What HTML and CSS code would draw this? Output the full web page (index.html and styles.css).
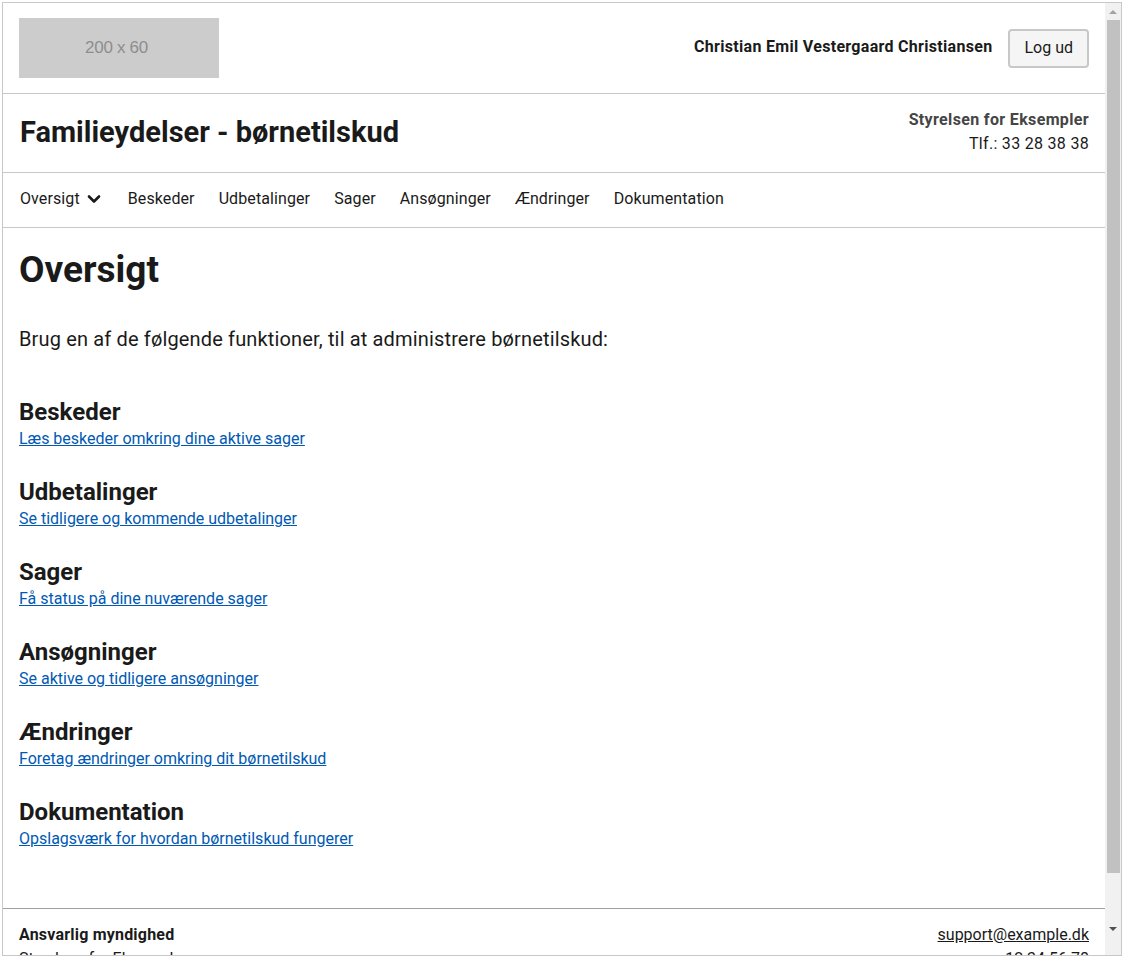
FILE: index.html
```html
<!DOCTYPE html>
<html lang="da">
<head>
<meta charset="utf-8">
<title>Familieydelser - børnetilskud</title>
<link rel="stylesheet" href="styles.css">
</head>
<body>
<div class="frame">
  <div class="viewport">
    <header class="site-header">
      <div class="logo">200 x 60</div>
      <div class="user">
        <span class="user-name">Christian Emil Vestergaard Christiansen</span>
        <button class="btn" type="button">Log ud</button>
      </div>
    </header>
    <div class="title-row">
      <div class="title">Familieydelser - børnetilskud</div>
      <div class="authority">
        <div class="authority-name">Styrelsen for Eksempler</div>
        <div class="authority-phone">Tlf.: 33 28 38 38</div>
      </div>
    </div>
    <nav class="nav">
      <a class="nav-item nav-current" href="#">Oversigt
        <svg class="chevron" width="14" height="10" viewBox="0 0 14 10" aria-hidden="true"><path d="M2 2.5 L7 7.5 L12 2.5" fill="none" stroke="#1a1a1a" stroke-width="2.6" stroke-linecap="round" stroke-linejoin="round"/></svg>
      </a>
      <a class="nav-item" href="#">Beskeder</a>
      <a class="nav-item" href="#">Udbetalinger</a>
      <a class="nav-item" href="#">Sager</a>
      <a class="nav-item" href="#">Ansøgninger</a>
      <a class="nav-item" href="#">Ændringer</a>
      <a class="nav-item" href="#">Dokumentation</a>
    </nav>
    <main class="main">
      <h1 class="page-title">Oversigt</h1>
      <p class="lead">Brug en af de følgende funktioner, til at administrere børnetilskud:</p>
      <section class="section">
        <h2 class="section-title">Beskeder</h2>
        <a class="link" href="#">Læs beskeder omkring dine aktive sager</a>
      </section>
      <section class="section">
        <h2 class="section-title">Udbetalinger</h2>
        <a class="link" href="#">Se tidligere og kommende udbetalinger</a>
      </section>
      <section class="section">
        <h2 class="section-title">Sager</h2>
        <a class="link" href="#">Få status på dine nuværende sager</a>
      </section>
      <section class="section">
        <h2 class="section-title">Ansøgninger</h2>
        <a class="link" href="#">Se aktive og tidligere ansøgninger</a>
      </section>
      <section class="section">
        <h2 class="section-title">Ændringer</h2>
        <a class="link" href="#">Foretag ændringer omkring dit børnetilskud</a>
      </section>
      <section class="section">
        <h2 class="section-title">Dokumentation</h2>
        <a class="link" href="#">Opslagsværk for hvordan børnetilskud fungerer</a>
      </section>
    </main>
    <footer class="footer">
      <div class="footer-col">
        <div class="footer-heading">Ansvarlig myndighed</div>
        <div>Styrelsen for Eksempler</div>
      </div>
      <div class="footer-col footer-right">
        <a class="footer-link" href="#">support@example.dk</a>
        <div>12 34 56 78</div>
      </div>
    </footer>
  </div>
  <div class="scrollbar">
    <div class="sb-button"><span class="arrow-up"></span></div>
    <div class="sb-thumb"></div>
    <div class="sb-track"></div>
    <div class="sb-button"><span class="arrow-down"></span></div>
    <div class="sb-rest"></div>
  </div>
</div>
</body>
</html>
```

FILE: styles.css
```css
* { box-sizing: border-box; }

html, body {
  margin: 0;
  padding: 0;
  background: #fff;
}

body {
  font-family: Roboto, "Noto Sans", sans-serif;
  font-size: 16px;
  line-height: 24px;
  color: #1a1a1a;
}

.frame {
  margin: 2px 0 0 2px;
  width: 1120px;
  height: 954px;
  border: 1px solid #c8c8c8;
  display: flex;
  overflow: hidden;
}

.viewport {
  flex: 1;
  overflow: hidden;
  display: flex;
  flex-direction: column;
}

/* header */
.site-header {
  display: flex;
  align-items: center;
  justify-content: space-between;
  padding: 15px 16px;
  border-bottom: 1px solid #c8c8c8;
  flex-shrink: 0;
}

.logo {
  width: 200px;
  height: 60px;
  background: #cccccc;
  color: #8e8e8e;
  font-family: "Liberation Sans", Arial, sans-serif;
  font-size: 17px;
  letter-spacing: -0.3px;
  padding-right: 5px;
  display: flex;
  align-items: center;
  justify-content: center;
}

.user {
  display: flex;
  align-items: center;
  gap: 16px;
}

.user-name {
  font-weight: 700;
  letter-spacing: 0.3px;
  margin-top: -2px;
}

.btn {
  font-family: inherit;
  font-size: 16px;
  line-height: 24px;
  color: #1a1a1a;
  background: #f5f5f5;
  border: 2px solid #c8c8c8;
  border-radius: 4px;
  padding: 5px 14px 6px;
}

/* title row */
.title-row {
  display: flex;
  align-items: center;
  justify-content: space-between;
  padding: 14px 16px 16px;
  border-bottom: 1px solid #c8c8c8;
  flex-shrink: 0;
}

.title {
  font-size: 29px;
  line-height: 36px;
  font-weight: 700;
  padding-left: 1px;
}

.authority {
  text-align: right;
}

.authority-name {
  font-weight: 700;
  color: #454545;
  letter-spacing: 0.35px;
}

.authority-phone {
  letter-spacing: 0.3px;
}

/* nav */
.nav {
  display: flex;
  align-items: center;
  gap: 24px;
  padding: 14px 17px 16px;
  border-bottom: 1px solid #c8c8c8;
  flex-shrink: 0;
}

.nav-item {
  color: #1a1a1a;
  text-decoration: none;
  display: flex;
  align-items: center;
  letter-spacing: 0.1px;
}

.chevron {
  margin-left: 7px;
  margin-right: 3px;
}

/* main */
.main {
  padding: 0 16px 57px;
  flex-shrink: 0;
}

.page-title {
  margin: 18px 0 0;
  font-size: 37px;
  line-height: 48px;
  font-weight: 700;
}

.lead {
  margin: 30px 0 0;
  font-size: 20px;
  line-height: 30px;
  letter-spacing: 0.15px;
}

.section {
  margin-top: 26px;
  display: flex;
  flex-direction: column;
  align-items: flex-start;
}

.lead + .section {
  margin-top: 43px;
}

.section-title {
  margin: 0;
  font-size: 24px;
  line-height: 30px;
  font-weight: 700;
}

.link {
  color: #0059b3;
  text-decoration: underline;
}

/* footer */
.footer {
  display: flex;
  justify-content: space-between;
  padding: 14px 16px 16px;
  border-top: 1px solid #a0a0a0;
  flex-shrink: 0;
}

.footer-heading {
  font-weight: 700;
  letter-spacing: 0.2px;
}

.footer-right {
  text-align: right;
  display: flex;
  flex-direction: column;
  align-items: flex-end;
}

.footer-link {
  color: #1a1a1a;
  text-decoration: underline;
}

/* fake scrollbar */
.scrollbar {
  width: 16px;
  flex-shrink: 0;
  background: #f1f1f1;
  display: flex;
  flex-direction: column;
}

.sb-button {
  height: 17px;
  display: flex;
  align-items: center;
  justify-content: center;
  flex-shrink: 0;
}

.arrow-up {
  width: 0;
  height: 0;
  border-left: 4px solid transparent;
  border-right: 4px solid transparent;
  border-bottom: 4px solid #a3a3a3;
}

.arrow-down {
  width: 0;
  height: 0;
  border-left: 4px solid transparent;
  border-right: 4px solid transparent;
  border-top: 4px solid #505050;
}

.sb-thumb {
  height: 853px;
  margin: 0 1px 0 2px;
  background: #c1c1c1;
  flex-shrink: 0;
}

.sb-track {
  height: 47px;
  flex-shrink: 0;
}

.sb-rest {
  flex: 1;
}
```
